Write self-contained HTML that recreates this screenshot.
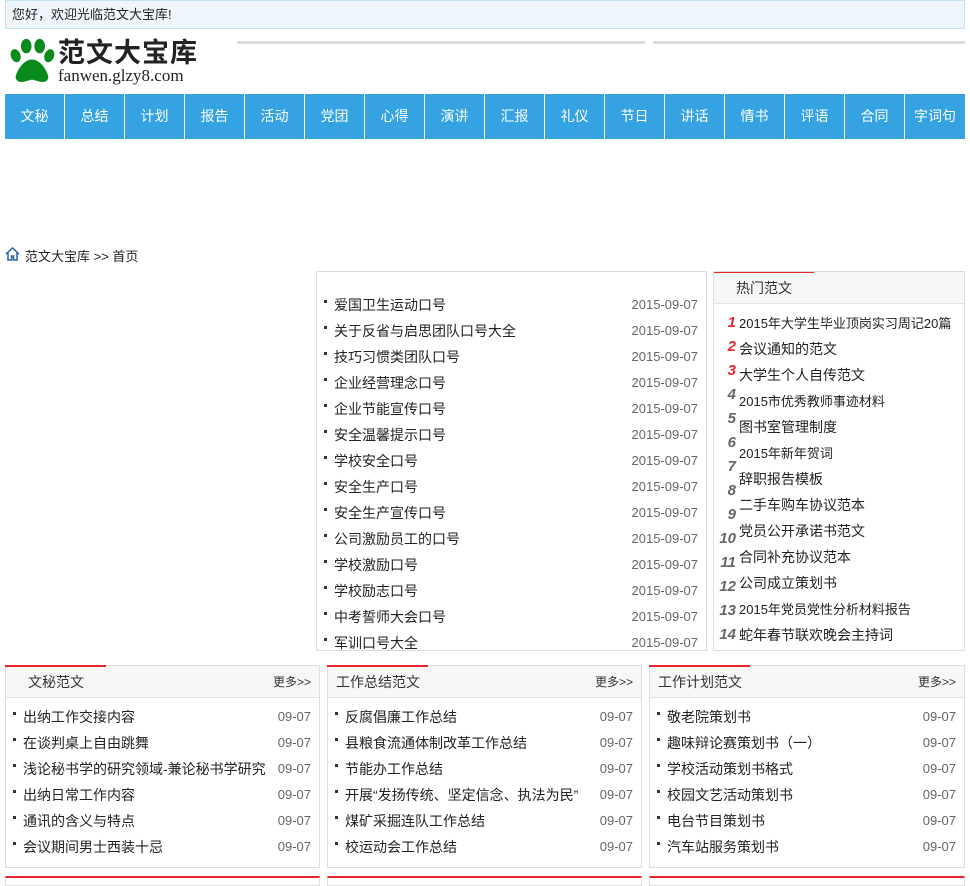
<!DOCTYPE html>
<html><head><meta charset="utf-8"><style>
*{margin:0;padding:0;box-sizing:border-box}
body{width:970px;height:882px;overflow:hidden;background:#fff;font-family:"Liberation Sans","Noto Sans CJK SC",sans-serif;font-size:14px;color:#222;position:relative}
.a{position:absolute}
.top{left:5px;top:0;width:960px;height:29px;background:#eef6fc;border:1px solid #c5e2f5;font-size:13px;line-height:27px;padding-left:6px}
.nav{left:5px;top:94px;width:960px;height:45px;background:#35a2e2;display:flex}
.nav div{width:60px;border-right:1px solid #fff;color:#fff;text-align:center;line-height:45px;font-size:14px}
.nav div:last-child{border-right:none}
.box{border:1px solid #ddd;background:#fff}
.hd{position:absolute;left:0;top:0;right:0;height:32px;background:#f7f7f7;border-bottom:1px solid #e3e3e3;line-height:32px;font-size:14px;color:#333}
.hd:before{content:"";position:absolute;left:-1px;top:-1px;width:101px;height:2px;background:#e8262a}
.hd span{position:absolute;right:8px;font-size:12px}
.row{position:absolute;height:26px;line-height:26px;white-space:nowrap}
.row:before{content:"";position:absolute;left:-10px;top:8px;width:3px;height:3px;background:#333}
.hot .row:before{display:none}
.dt{position:absolute;right:0;color:#666;font-size:13px}
.n{position:absolute;left:0;width:22px;text-align:right;font-style:italic;font-weight:bold;color:#666;font-size:15px;height:24px;line-height:24px}
.n.r{color:#e8262a}
</style></head><body>
<div class="a top">您好，欢迎光临范文大宝库!</div>
<svg class="a" style="left:8px;top:37px" width="48" height="47" viewBox="0 0 50 46">
<g fill="#0a8a1a"><ellipse cx="8" cy="18" rx="5" ry="7" transform="rotate(-20 8 18)"/><ellipse cx="19" cy="8" rx="5.5" ry="7.5"/><ellipse cx="33" cy="8" rx="5.5" ry="7.5"/><ellipse cx="43" cy="18" rx="5" ry="7" transform="rotate(20 43 18)"/><path d="M25 22c-9 0-16 12-17 18 0 5 5 6 9 5 4-1 6-2 8-2s4 1 8 2c4 1 9 0 9-5-1-6-8-18-17-18z"/></g></svg>
<div class="a" style="left:58px;top:34px;font-size:27px;font-weight:bold;color:#222;letter-spacing:1px;font-family:'Noto Sans CJK SC',sans-serif;line-height:34px">范文大宝库</div>
<div class="a" style="left:58px;top:66px;font-size:17px;font-family:'Liberation Serif',serif;color:#222">fanwen.glzy8.com</div>
<div class="a" style="left:237px;top:41px;width:408px;height:3px;background:#ddd"></div>
<div class="a" style="left:653px;top:41px;width:312px;height:3px;background:#ddd"></div>
<div class="a nav"><div>文秘</div><div>总结</div><div>计划</div><div>报告</div><div>活动</div><div>党团</div><div>心得</div><div>演讲</div><div>汇报</div><div>礼仪</div><div>节日</div><div>讲话</div><div>情书</div><div>评语</div><div>合同</div><div>字词句</div></div>
<svg class="a" style="left:5px;top:247px" width="15" height="14" viewBox="0 0 15 14"><path d="M1 7L7.5 1 14 7M3 6v7h3.5V9h2v4H12V6" fill="none" stroke="#2a5f9e" stroke-width="1.5"/></svg>
<div class="a" style="left:25px;top:246px;font-size:13px">范文大宝库 &gt;&gt; 首页</div>

<div class="a box" style="left:316px;top:271px;width:391px;height:380px;overflow:hidden">
<div style="position:absolute;left:17px;top:20px;width:364px">
<div class="row" style="top:0;left:0;right:0">爱国卫生运动口号<span class="dt">2015-09-07</span></div>
<div class="row" style="top:26px;left:0;right:0">关于反省与启思团队口号大全<span class="dt">2015-09-07</span></div>
<div class="row" style="top:52px;left:0;right:0">技巧习惯类团队口号<span class="dt">2015-09-07</span></div>
<div class="row" style="top:78px;left:0;right:0">企业经营理念口号<span class="dt">2015-09-07</span></div>
<div class="row" style="top:104px;left:0;right:0">企业节能宣传口号<span class="dt">2015-09-07</span></div>
<div class="row" style="top:130px;left:0;right:0">安全温馨提示口号<span class="dt">2015-09-07</span></div>
<div class="row" style="top:156px;left:0;right:0">学校安全口号<span class="dt">2015-09-07</span></div>
<div class="row" style="top:182px;left:0;right:0">安全生产口号<span class="dt">2015-09-07</span></div>
<div class="row" style="top:208px;left:0;right:0">安全生产宣传口号<span class="dt">2015-09-07</span></div>
<div class="row" style="top:234px;left:0;right:0">公司激励员工的口号<span class="dt">2015-09-07</span></div>
<div class="row" style="top:260px;left:0;right:0">学校激励口号<span class="dt">2015-09-07</span></div>
<div class="row" style="top:286px;left:0;right:0">学校励志口号<span class="dt">2015-09-07</span></div>
<div class="row" style="top:312px;left:0;right:0">中考誓师大会口号<span class="dt">2015-09-07</span></div>
<div class="row" style="top:338px;left:0;right:0">军训口号大全<span class="dt">2015-09-07</span></div>
</div></div>

<div class="a box hot" style="left:713px;top:271px;width:252px;height:380px;overflow:hidden">
<div class="hd" style="padding-left:22px">热门范文</div>
<div style="position:absolute;left:0;top:39px;width:30px">
<i class="n r" style="top:0">1</i><i class="n r" style="top:24px">2</i><i class="n r" style="top:48px">3</i><i class="n" style="top:72px">4</i><i class="n" style="top:96px">5</i><i class="n" style="top:120px">6</i><i class="n" style="top:144px">7</i><i class="n" style="top:168px">8</i><i class="n" style="top:192px">9</i><i class="n" style="top:216px">10</i><i class="n" style="top:240px">11</i><i class="n" style="top:264px">12</i><i class="n" style="top:288px">13</i><i class="n" style="top:312px">14</i>
</div>
<div style="position:absolute;left:25px;top:38px;width:230px;font-size:14px">
<div class="row" style="top:0"><span style="font-size:13px">2015年大学生毕业顶岗实习周记20篇</span></div>
<div class="row" style="top:26px">会议通知的范文</div>
<div class="row" style="top:52px">大学生个人自传范文</div>
<div class="row" style="top:78px"><span style="font-size:13px">2015市优秀教师事迹材料</span></div>
<div class="row" style="top:104px">图书室管理制度</div>
<div class="row" style="top:130px"><span style="font-size:13px">2015年新年贺词</span></div>
<div class="row" style="top:156px">辞职报告模板</div>
<div class="row" style="top:182px">二手车购车协议范本</div>
<div class="row" style="top:208px">党员公开承诺书范文</div>
<div class="row" style="top:234px">合同补充协议范本</div>
<div class="row" style="top:260px">公司成立策划书</div>
<div class="row" style="top:286px"><span style="font-size:13px">2015年党员党性分析材料报告</span></div>
<div class="row" style="top:312px">蛇年春节联欢晚会主持词</div>
</div></div>

<div class="a box" style="left:5px;top:665px;width:315px;height:203px">
<div class="hd" style="padding-left:22px">文秘范文<span>更多&gt;&gt;</span></div>
<div style="position:absolute;left:17px;top:38px;width:288px">
<div class="row" style="top:0;left:0;right:0">出纳工作交接内容<span class="dt">09-07</span></div>
<div class="row" style="top:26px;left:0;right:0">在谈判桌上自由跳舞<span class="dt">09-07</span></div>
<div class="row" style="top:52px;left:0;right:0">浅论秘书学的研究领域-兼论秘书学研究<span class="dt">09-07</span></div>
<div class="row" style="top:78px;left:0;right:0">出纳日常工作内容<span class="dt">09-07</span></div>
<div class="row" style="top:104px;left:0;right:0">通讯的含义与特点<span class="dt">09-07</span></div>
<div class="row" style="top:130px;left:0;right:0">会议期间男士西装十忌<span class="dt">09-07</span></div>
</div></div>
<div class="a box" style="left:327px;top:665px;width:315px;height:203px">
<div class="hd" style="padding-left:8px">工作总结范文<span>更多&gt;&gt;</span></div>
<div style="position:absolute;left:17px;top:38px;width:288px">
<div class="row" style="top:0;left:0;right:0">反腐倡廉工作总结<span class="dt">09-07</span></div>
<div class="row" style="top:26px;left:0;right:0">县粮食流通体制改革工作总结<span class="dt">09-07</span></div>
<div class="row" style="top:52px;left:0;right:0">节能办工作总结<span class="dt">09-07</span></div>
<div class="row" style="top:78px;left:0;right:0">开展“发扬传统、坚定信念、执法为民”<span class="dt">09-07</span></div>
<div class="row" style="top:104px;left:0;right:0">煤矿采掘连队工作总结<span class="dt">09-07</span></div>
<div class="row" style="top:130px;left:0;right:0">校运动会工作总结<span class="dt">09-07</span></div>
</div></div>
<div class="a box" style="left:649px;top:665px;width:316px;height:203px">
<div class="hd" style="padding-left:8px">工作计划范文<span>更多&gt;&gt;</span></div>
<div style="position:absolute;left:17px;top:38px;width:289px">
<div class="row" style="top:0;left:0;right:0">敬老院策划书<span class="dt">09-07</span></div>
<div class="row" style="top:26px;left:0;right:0">趣味辩论赛策划书（一）<span class="dt">09-07</span></div>
<div class="row" style="top:52px;left:0;right:0">学校活动策划书格式<span class="dt">09-07</span></div>
<div class="row" style="top:78px;left:0;right:0">校园文艺活动策划书<span class="dt">09-07</span></div>
<div class="row" style="top:104px;left:0;right:0">电台节目策划书<span class="dt">09-07</span></div>
<div class="row" style="top:130px;left:0;right:0">汽车站服务策划书<span class="dt">09-07</span></div>
</div></div>
<div class="a" style="left:5px;top:876px;width:315px;height:10px;border:1px solid #ddd;border-top:2px solid #e8262a"></div>
<div class="a" style="left:327px;top:876px;width:315px;height:10px;border:1px solid #ddd;border-top:2px solid #e8262a"></div>
<div class="a" style="left:649px;top:876px;width:316px;height:10px;border:1px solid #ddd;border-top:2px solid #e8262a"></div>
</body></html>
